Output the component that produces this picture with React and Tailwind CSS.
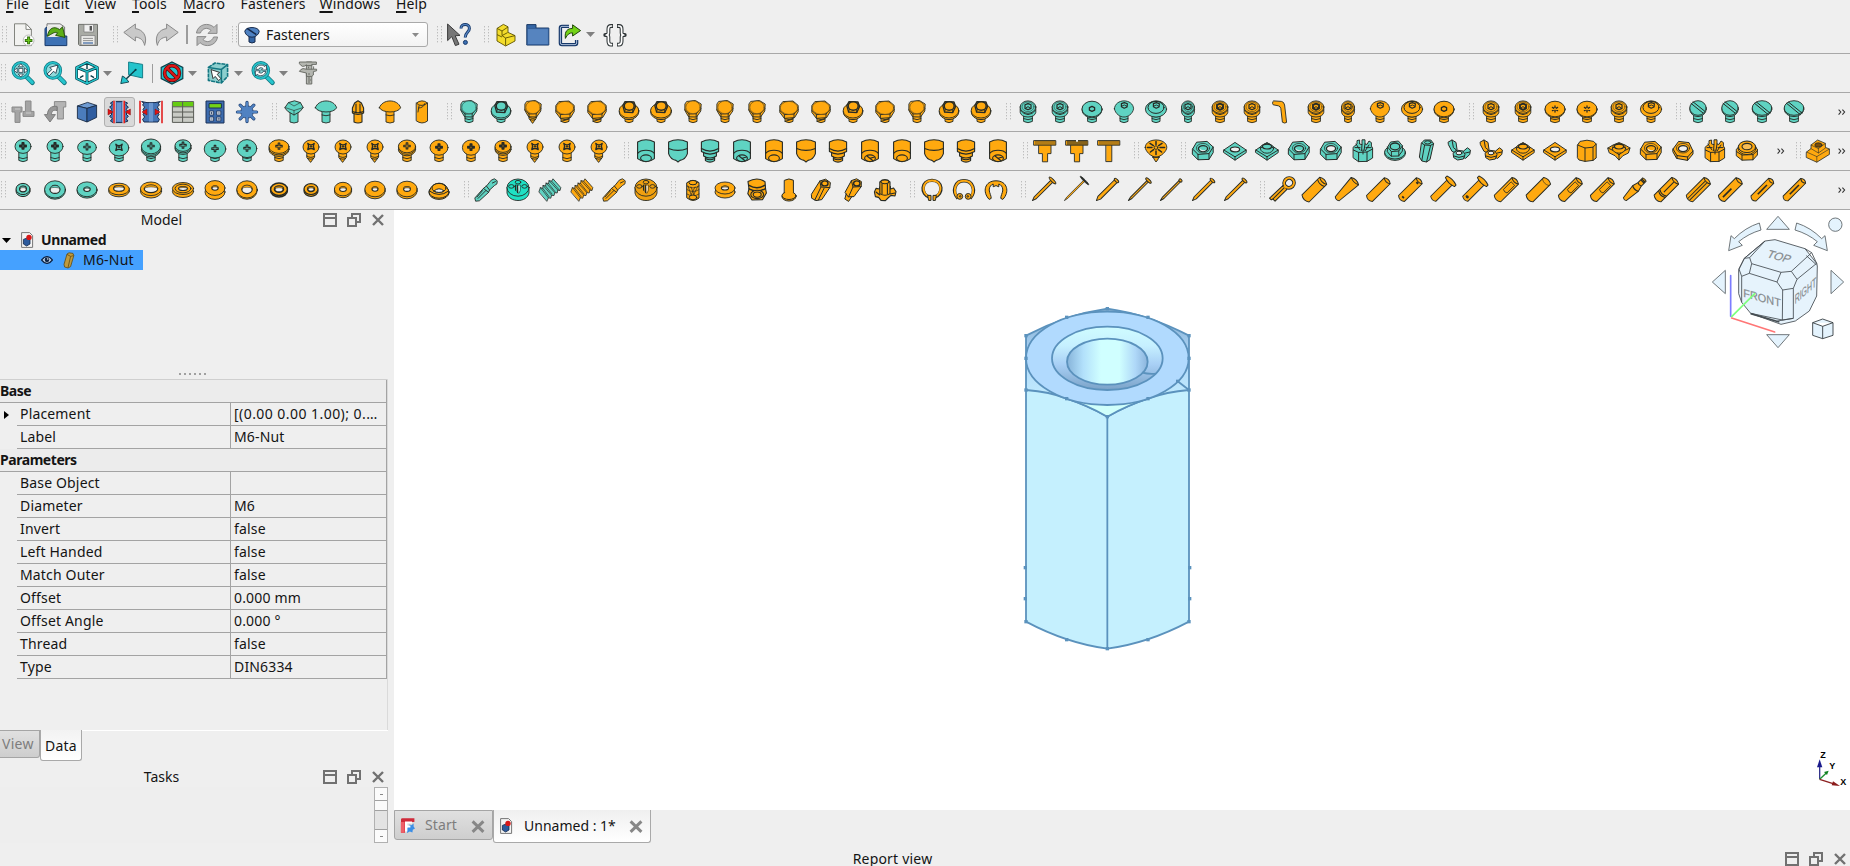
import React from "react";

const TEAL = "#5fd3c2";
const ORANGE = "#ffa90f";
const INK = "#262a26";

const Svg = ({ children, size = 24, box = 24, className = "" }) => (
  <svg width={size} height={size} viewBox={`0 0 ${box} ${box}`} className={`block shrink-0 overflow-visible ${className}`}>
    {children}
  </svg>
);

const Part = ({ c = ORANGE, w = 0.9, children }) => (
  <Svg>
    <g fill={c} stroke={INK} strokeWidth={w} strokeLinejoin="round" strokeLinecap="round">
      {children}
    </g>
  </Svg>
);

const Shank = ({ r = 4, top = 12, point = false }) =>
  point ? (
    <>
      <path d={`M${12 - r} ${top}V18.5L11.6 23.4L${12 + r - 0.6} 18V${top}z`} />
      <path d={`M${12 - r} 17Q12 20 ${12 + r - 0.5} 17M${12 - r + 1} 19.6Q12 21 ${12 + r - 1.5} 19.6`} fill="none" />
    </>
  ) : (
    <>
      <path d={`M${12 - r} ${top}V21.4Q12 24 ${12 + r} 21.4V${top}z`} />
      <path d={`M${12 - r} 18.6Q12 21 ${12 + r} 18.6`} fill="none" />
    </>
  );

/* Hexagon-head bolts */
const Hex = ({ c, wide, point }) => (
  <Part c={c}>
    <Shank r={4} top={13} point={point} />
    {wide ? (
      <>
        <path d="M6.2 1.6L16 1L21.2 5.4V11.6L17.6 17.6L7.4 18.4L2.8 12.4V6z" />
        <path d="M2.8 10.6L7.4 14.6L17 14L21.2 9.4M7.4 14.6V18.2M17 14V17.6" fill="none" />
        <ellipse cx="12" cy="7.9" rx="8.7" ry="6.5" strokeWidth=".5" />
        <path d="M8 21.4L16 19" fill="none" />
      </>
    ) : (
      <>
        <path d="M6 1.4L14.4 .5L20.2 4L19.8 11L15.6 17L7.6 16.8L3.8 10.4L3.9 4.4z" />
        <path d="M4 9.6L8 14L15.2 13.8L19.9 8.6M8 14V16.8M15.2 13.8V17" fill="none" />
        <ellipse cx="12" cy="7.3" rx="7.2" ry="6.4" strokeWidth=".5" />
      </>
    )}
  </Part>
);
const Flange = ({ c, big }) => (
  <Part c={c}>
    <Shank r={4} top={14} />
    <ellipse cx="12" cy="11.8" rx={big ? 10.4 : 9.8} ry="7.8" />
    <ellipse cx="12" cy="10.6" rx={big ? 10.4 : 9.8} ry="7.4" />
    <path d="M5.8 5.6L7.6 12L15.8 12.6L18.6 6.6L17 2L8 1.6z" strokeWidth="1.3" />
    <ellipse cx="12.2" cy="6" rx="5" ry="4.3" strokeWidth="1.5" />
    <path d="M7.6 12L8.4 9.4M15.8 12.6L15.2 9.6" fill="none" />
  </Part>
);

/* Carriage and T bolts */
const Carriage = ({ c }) => (
  <Part c={c}>
    <path d="M8 12V22Q12 24 16 22V12z" />
    <path d="M3 7.5L6.4 2.6L12.5 .8L18.4 2.6L21.2 7.5L18 11.5L12 15L6 11.5z" />
    <path d="M3 7.5L12 10.5L21.2 7.5M12 10.5V15M6.4 2.6L12 6L18.4 2.6" fill="none" strokeWidth=".6" />
  </Part>
);
const Dome = ({ c }) => (
  <Part c={c}>
    <path d="M8 11V22Q12 24 16 22V11z" />
    <path d="M8 15Q12 16.6 16 15" fill="none" />
    <path d="M1.4 7.8C4-1.4 20-1.4 22.6 7.8C20 13.4 4 13.4 1.4 7.8z" />
  </Part>
);
const SlimT = () => (
  <Part w={1.1}>
    <path d="M8 12V22Q12 24 16 22V12z" />
    <path d="M12 .8L15.4 3L17.6 8V13Q12 15.8 6.4 13V8L8.6 3z" />
    <path d="M10 4V13M14 4V13M6.4 11.6Q12 14 17.6 11.6" fill="none" />
  </Part>
);
const Stud = () => (
  <Part>
    <path d="M6.5 3Q12 -1.4 17.5 3V21Q12 25 6.5 21z" />
    <path d="M6.5 3Q8 6 12 5.4T17.5 3M8.6 8Q13.6 8 15 3.4M8 12L9 6" fill="none" />
  </Part>
);

/* Socket-head screws */
const Socket = ({ c, small, dark }) => {
  const r = small ? 6.4 : 7.8;
  return (
    <Part c={c}>
      <Shank r={small ? 3.4 : 4.4} top={14} />
      <path d={`M${12 - r} 6.6V12.4Q${12 - r + 1} 16.8 12 17Q${12 + r - 1} 16.8 ${12 + r} 12.4V6.6z`} />
      <path d={`M${12 - r} 10Q12 19.6 ${12 + r} 10`} fill="none" />
      <ellipse cx="12" cy="7.1" rx={r} ry="6.2" />
      <ellipse cx="12" cy="6.8" rx={r - 1.8} ry="4.8" strokeWidth=".5" />
      <path d="M9 4.8L12 3.6L15 4.8V8.4L12 9.8L9 8.4z" strokeWidth={dark ? 1.9 : 1.2} />
      <path d="M10 8L12 6.6L14 8" fill="none" strokeWidth="1" />
    </Part>
  );
};
const DiscSocket = ({ c, torx }) => (
  <Part c={c}>
    <Shank r={4.4} top={14} />
    <ellipse cx="12" cy="9.8" rx="10" ry="8" />
    <ellipse cx="12" cy="9" rx="10" ry="7.8" />
    {torx ? (
      <>
        <path d="M12 6V12M9.4 7.4L14.6 10.6M14.6 7.4L9.4 10.6" strokeWidth="1.3" />
        <circle cx="12" cy="9" r="1.1" stroke="none" />
      </>
    ) : (
      <path d="M9.4 7.6L12 6.4L14.6 7.6V10.2L12 11.4L9.4 10.2z" strokeWidth="1.3" />
    )}
  </Part>
);
const ButtonSocket = ({ c, flange }) => (
  <Part c={c}>
    <Shank r={4} top={13} />
    <path d="M2.4 8.8C3-1.8 21-1.8 21.6 8.8C20.6 14 16 17 12 17S3.4 14 2.4 8.8z" strokeWidth=".85" />
    {flange && (
      <>
        <ellipse cx="12" cy="9.2" rx="10.6" ry="7.9" />
        <ellipse cx="12" cy="7.4" rx="8" ry="6" strokeWidth="1" />
      </>
    )}
    <path d="M9.4 3.6L12.4 2.6L15.4 3.8L15 7L12.2 8.2L9.4 6.8z" strokeWidth="1.2" />
    <path d="M10 6L12.4 5L15 6.4" fill="none" />
  </Part>
);
const AllenKey = () => (
  <Part>
    <path d="M.8 1.8Q0 3.6 1.2 4.8L6.4 5.8Q8.4 6.4 8.8 8.4L10.4 22.2Q12.6 23.8 14.6 22.4L12.6 5Q12 1.8 9.4 1.4L2 .9z" />
  </Part>
);
const Slotted = ({ c, wide }) => (
  <Part c={c}>
    <Shank r={4.4} top={12} />
    <ellipse cx="12" cy="9.2" rx={wide ? 9.8 : 8.2} ry="7.4" />
    <ellipse cx="12" cy="8" rx={wide ? 9.8 : 8.2} ry="7.3" />
    <path d={wide ? "M4.4 3.2L18 14.4M6.4 2L20 13" : "M5 3.4L17 13M7 1.8L19 11.4"} strokeWidth="1" />
  </Part>
);

/* Cross-recess screws */
const Cross = ({ y = 7, bold }) => (
  <path
    d={`M11.2 ${y - 3.2}H12.8V${y - 0.8}H15.2V${y + 0.8}H12.8V${y + 3}H11.2V${y + 0.8}H8.8V${y - 0.8}H11.2z`}
    strokeWidth={bold ? 1.5 : 1.1}
  />
);
const XMark = ({ y = 7 }) => (
  <>
    <path d={`M8.8 ${y - 3}Q12 ${y} 15.2 ${y - 3}Q13.4 ${y} 15.2 ${y + 3.2}Q12 ${y + 1} 8.8 ${y + 3.2}Q10.6 ${y} 8.8 ${y - 3}z`} strokeWidth="1.3" />
    <circle cx="12" cy={y} r=".9" fill={INK} strokeWidth=".4" />
  </>
);
const Pan = ({ c, rx = 8, ry = 7, x, point, rim, bold, shank = 4.2, cy = 7.4 }) => (
  <Part c={c}>
    <Shank r={shank} top={12} point={point} />
    {rim && <ellipse cx="12" cy={cy + 3} rx={rx} ry={ry} />}
    {rim && <ellipse cx="12" cy={cy + 1.5} rx={rx} ry={ry} />}
    <ellipse cx="12" cy={cy} rx={rx} ry={ry} />
    {x ? <XMark y={cy - 0.6} /> : <Cross y={cy - 0.4} bold={bold} />}
  </Part>
);

/* Set screws */
const SetScrew = ({ c, tip }) => (
  <Part c={c} w={1.1}>
    {tip === "dog" ? (
      <>
        <path d="M7.4 16V21.6Q12 24.6 16.6 21.6V16z" />
        <path d="M5.6 12V17Q12 21 18.4 17V12z" />
        <path d="M3.4 3Q12 -1.4 20.6 3V12.6Q12 17.6 3.4 12.6z" />
        <path d="M3.4 9.6Q12 14.6 20.6 9.6M7.4 19.6Q12 22 16.6 19.6" fill="none" />
      </>
    ) : tip === "cone" ? (
      <>
        <path d="M2.6 3Q12 -1.4 21.4 3V14.6Q19.6 20.4 14 21.4L12 23L10 21.4Q4.4 20.4 2.6 14.6z" />
        <path d="M2.6 9.4Q12 13.4 21.4 9.4" fill="none" />
      </>
    ) : (
      <>
        <path d="M3.6 3Q12 -1.4 20.4 3V19.6Q12 26 3.6 19.6z" />
        <path d="M3.6 14.4Q6 11.2 12 11.2T20.4 14.4" fill="none" />
        <ellipse cx="12" cy="19.2" rx="5.4" ry="3.3" />
        {tip === "cup" && <path d="M9 17L15 21.8M12 19.2L16.6 18" fill="none" />}
      </>
    )}
  </Part>
);

/* Thumb screws and dial */
const Thumb = ({ narrow, notch }) => (
  <Part>
    <path d={narrow ? "M9.2 5H14.8V22.6H9.2z" : "M6 5H18V14.6H14.6V22.8H9.4V14.6H6z"} />
    <path d="M1 1.6H22.8V6.2H1z" />
    <path d="M3 1.6V5.4M5 1.6V5.4M7 1.6V5.4M9 1.6V5.4M11 1.6V5.4M13 1.6V5.4M15 1.6V5.4M17 1.6V5.4M19 1.6V5.4M21 1.6V5.4" strokeWidth={notch ? 1.1 : 0.7} />
    {notch && <path d="M11 1H13V2.8H11z" fill="#efefef" stroke="none" />}
  </Part>
);
const Dial = () => (
  <Part>
    <path d="M8 16L10.6 21L12 23L13.6 21L16 16z" />
    <path d="M1.2 8.4C1.2-1.6 22.8-1.6 22.8 8.4C22.8 12 17 18 12 18S1.2 12 1.2 8.4z" />
    <circle cx="12" cy="8.6" r="1.8" />
    <path d="M12 2.4V5.4M12 12V15.4M3.4 8.6H8M16 8.6H20.6M6 4.4L9.4 6.6M18 4.4L14.6 6.6M6.4 13L9.6 10.6M17.6 13L14.4 10.6" strokeWidth="1.5" />
    <path d="M8.6 18.4H15.4" fill="none" />
  </Part>
);

/* Nuts */
const HexNut = ({ c, open, tilt }) => (
  <Part c={c} w={1}>
    <path d={tilt ? "M2 10L7.6 2.4L18 3.6L22 12V15L16.6 21.4L5.6 19.4L2 13z" : "M1.6 10L5.6 3.2L16 2.4L22.2 8V13.6L18 20.4L7 20.8L1.6 15.4z"} />
    <path d={tilt ? "M2 10L6 16.6L16.6 18L22 12M6 16.6V19.4M16.6 18V21.2" : "M1.6 10L7 15.4L18 14.6L22.2 8M7 15.4V20.6M18 14.6V20.2"} fill="none" />
    <ellipse cx="12" cy="9.2" rx="6.6" ry="4.8" strokeWidth=".7" />
    <ellipse cx="12" cy="9.6" rx="4.6" ry="3" fill={open ? "#efefef" : c} strokeWidth="1.3" />
    {!open && <path d="M8.6 9.2Q12 12.8 15.6 10Q13.4 13.4 9.6 11.6z" fill="#efefef" stroke="none" />}
  </Part>
);
const SquareNut = ({ c, raised, curved }) => (
  <Part c={c} w={0.95}>
    <path d={curved ? "M1 9L6 6L12 3.6L18 6L23 9L21.4 14Q15 16 12 21Q9 16 2.6 14z" : "M.8 11L12 3.4L23.2 11V13.6L12 21.2L.8 13.6z"} />
    <path d={curved ? "M1 9L8 12.4L12 16L16 12.4L23 9M12 16V21" : "M.8 11L12 17.8L23.2 11M12 17.8V21"} fill="none" />
    {raised && <ellipse cx="12" cy="9.4" rx="6.6" ry="4.8" />}
    {raised && <path d="M5.4 9.4Q12 2 18.6 9.4" fill="none" />}
    <ellipse cx="12" cy={raised ? 7.6 : 10.4} rx="4.6" ry="2.4" fill={raised ? c : "#efefef"} strokeWidth="1.2" />
  </Part>
);
const Castle = ({ c }) => (
  <Part c={c} w={0.95}>
    <path d="M2.4 8L6 5V1.6L8.6 1V5L11 5.6V.8H14V5L16 5.4L18 2L20.4 3.6V7L21.6 9V19L16 22.4L7.4 22.6L2.4 19z" />
    <path d="M2.4 11L7.6 13.4L16 13L21.6 10M7.6 13.4V22.4M16 13V22.2M5 5L9 11M11 5.6L10.6 11.6M14 5L13 11.6M18 6L14.4 11.6M4 8.6H9M15 8.6H20M12 11V15" fill="none" strokeWidth="1" />
  </Part>
);
const FlangeNut = ({ c }) => (
  <Part c={c} w={0.95}>
    <ellipse cx="12" cy="14.4" rx="10.4" ry="7" />
    <ellipse cx="12" cy="13.2" rx="10.4" ry="6.8" />
    <path d="M4.6 8L7.6 3L15.4 2L19.4 6.8V12L15.6 17L8 17.2L4.6 13z" />
    <path d="M4.6 8L8.4 12.6L15.8 12L19.4 6.8M8.4 12.6V17M15.8 12V17" fill="none" />
    <ellipse cx="12" cy="7.4" rx="4.8" ry="3.4" strokeWidth="1.3" />
  </Part>
);
const LongNut = ({ c }) => (
  <Part c={c} w={1}>
    <path d="M6.6 4L9.4 1L15.8 1L18.6 4.6L15 20.6L11.6 23L6.8 22L4.6 18.4z" />
    <path d="M6.6 4L9.6 6L15.6 6.4L18.6 4.6M9.6 6L6.8 21.6M15.6 6.4L11.6 22.6" fill="none" />
    <ellipse cx="12.8" cy="3.4" rx="3.2" ry="1.6" />
  </Part>
);
const WingNut = ({ c }) => (
  <Part c={c} w={1}>
    <path d="M1.4 3L5 1L9 3.4L10 10.4L7.4 13.4L5 12.4L1.6 6z" />
    <path d="M16 12.6L20.4 8.8L23.4 11L22.8 15.4L18.6 19.4L15 18z" />
    <path d="M6.4 14L10 11.2L16 12L18 15.6L16.4 20L10.6 21L7 18.8z" />
    <path d="M5 1L6.4 8.6L9.4 11M18.4 14L22.8 13M7 17L12 18.4L17.4 17" fill="none" />
    <ellipse cx="12" cy="14" rx="3" ry="1.8" fill="#efefef" />
  </Part>
);
const CapNut = () => (
  <Part w={0.95}>
    <path d="M2.6 6L5 2.4L12 1.2L18.6 2.4L21.2 5V19L18 21.4L10 22.4L4 21L2.6 19z" />
    <path d="M2.6 6L10 9L18 8.2L21.2 5M10 9V22.2M18 8.2V21.4" fill="none" />
  </Part>
);
const Nyloc = () => (
  <Part w={0.95}>
    <path d="M1.6 10L5 7L19 7L22.4 10V16L18 20.8L7 21.2L1.6 17z" />
    <path d="M1.6 12.6L7 16L18 15.6L22.4 11.6M7 16V21M18 15.6V20.8" fill="none" />
    <ellipse cx="12" cy="9" rx="9" ry="6.6" />
    <ellipse cx="12" cy="7.8" rx="8.6" ry="5.8" />
    <ellipse cx="12" cy="7.6" rx="5" ry="3.2" fill="#f9bd55" strokeWidth="1.1" />
  </Part>
);
const TSlot = () => (
  <Part w={0.8}>
    <path d="M.6 13L5 9.6V6L11.6 1L19.4 4.4V8.4L23.4 10V15.4L10.8 23.2L.6 18.6z" />
    <path d="M5 6L12.4 9.6L19.4 4.4M12.4 9.6V14L19.4 9M5 9.6L12.4 14M.6 13L10.8 17.6L23.4 10M10.8 17.6V23" fill="none" strokeWidth=".6" />
    <ellipse cx="12.4" cy="6" rx="3.6" ry="2.2" fill="#7a4d08" />
  </Part>
);

/* Washers: outer radii, hole radii, thickness */
const Washer = ({ c = ORANGE, rx, ry, hx, hy, t = 2, w = 0.9, dy = 0, step }) => (
  <Part c={c} w={w}>
    <ellipse cx="12" cy={12 + t / 2} rx={rx} ry={ry} />
    <ellipse cx="12" cy={12 - t / 2} rx={rx} ry={ry} />
    {step && <ellipse cx="12" cy={12 - t / 2} rx={rx * 0.75} ry={ry * 0.72} />}
    <ellipse cx="12" cy={12 - t / 2 + dy} rx={hx} ry={hy} fill="#efefef" strokeWidth={w * 1.2} />
    <path d={`M${12 - hx} ${12 - t / 2 + dy}A${hx} ${hy} 0 0 1 ${12 + hx} ${12 - t / 2 + dy}A${hx} ${hy * 0.5} 0 0 0 ${12 - hx} ${12 - t / 2 + dy}`} strokeWidth=".5" />
  </Part>
);
const ConeWasher = () => (
  <Part w={1}>
    <ellipse cx="12" cy="14.8" rx="10" ry="6.6" />
    <ellipse cx="12" cy="13.8" rx="10" ry="6.4" />
    <path d="M2.4 13Q4.6 5.4 12 5.2T21.6 13Q12 20 2.4 13z" />
    <ellipse cx="12" cy="10" rx="7" ry="4.6" />
    <path d="M7 13Q12 8.4 17 13Q12 16 7 13z" fill="#efefef" />
  </Part>
);

/* Threaded parts */
const Tap = ({ c }) => (
  <Part c={c}>
    <path d="M17.6 2L20.4 .8L23.2 2.8L23 5.8L20.4 7.6L15.6 12L14.6 14.4L5.4 22.8L1.6 23.2L.8 20L9.4 10.4L12.4 8z" />
    <path d="M12.4 8L15.6 12M9.4 10.4L14.6 14.4M4 20.4L12 12.4M3 19L8.6 12.6M18.4 5L21.4 3.6" fill="none" />
  </Part>
);
const Die = ({ c }) => (
  <Part c={c}>
    <path d="M1 9.4V15C3 25 21 25 23 15V9.4z" />
    <ellipse cx="12" cy="9.6" rx="11" ry="8.6" />
    <ellipse cx="12" cy="4.2" rx="2.8" ry="1.8" />
    <ellipse cx="5.4" cy="8.4" rx="2.8" ry="1.8" />
    <ellipse cx="18.6" cy="8.4" rx="2.8" ry="1.8" />
    <path d="M9.4 7H14.6L14.4 12.6L13 15.4L10 12.6z" strokeWidth=".5" />
    <path d="M12 8L13.6 7.6V12L12.6 15z" fill="#efefef" stroke="none" />
    <path d="M11.6 7.6V14.6M9.6 7.4V12" fill="none" strokeWidth="1.3" />
  </Part>
);
const ThreadRod = ({ c }) => (
  <Part c={c} w={0.8}>
    <path d="M1 13.6L2.4 9.6L4.8 10.4L5 7.4L7.6 8L8 5L10.6 5.6L11 2.6L13.6 3.2L15 .8L22.8 9.6L22 12.6L19.8 12L19.2 15L16.8 14.6L16 17.6L13.6 17.2L12.8 20.2L10.4 19.8L9 23z" />
    <path d="M2.4 9.6L10.4 19.8M5 7.4L13.6 17.2M8 5L16.8 14.6M11 2.6L19.8 12M4.8 10.4L11 18.6M7.6 8L14 16M10.6 5.6L17 13.6M13.6 3.2L21 11.6" fill="none" strokeWidth=".7" />
  </Part>
);

/* Inserts, spacers */
const Insert = () => (
  <Part w={1}>
    <path d="M6 4.6Q12 0 18 4.6V20Q12 25 6 20z" />
    <path d="M6 8Q12 12 18 8M6 11.6Q12 15.6 18 11.6M6 16Q12 20 18 16M7 8L10.6 18M10 9L14 19M17 8L12 18M14 9L9 19" fill="none" strokeWidth=".7" />
    <ellipse cx="12" cy="4.6" rx="4" ry="2.2" />
    <ellipse cx="12" cy="19.4" rx="3.8" ry="2.4" />
  </Part>
);
const PressNut = () => (
  <Part w={1.1}>
    <path d="M3 3.6Q12 -1.6 20 3.6L20.6 11L21.4 15L17.6 21.6L7 22L2.8 15.6L4 11z" />
    <path d="M4 7.4Q12 12 19.6 7.4M4 10.8Q12 15 20 10.8" fill="none" strokeWidth="1.5" />
    <ellipse cx="12.2" cy="16.4" rx="6.4" ry="4.2" />
    <ellipse cx="12.2" cy="16.6" rx="4" ry="2.6" />
  </Part>
);
const Rivet = () => (
  <Part w={1}>
    <path d="M7.6 2.2Q12 -.4 16.4 2.2V16H7.6z" />
    <ellipse cx="12" cy="18.6" rx="7" ry="4.4" />
    <ellipse cx="12" cy="17.6" rx="7" ry="3.9" />
    <path d="M8.1 12.6H15.9V16H8.1z" stroke="none" />
  </Part>
);
const Standoff = ({ stud }) => (
  <Part w={1}>
    {stud && <path d="M5.2 15.6L3.8 21L7.6 23.4L11 18.4z" />}
    <path d={stud ? "M4.2 14L10.4 2.6L15.6 .8L20.4 3.6L20.2 8.6L13 18.6L7.6 18.8z" : "M2.6 16L10.8 3L16.6 1.2L21.4 4.6L20.8 9.6L12.8 21.6L7 22.6L3 20.4z"} />
    <path d={stud ? "M10.4 2.6L12 9L7.6 18.8M12 9L20.2 8.6" : "M10.8 3L12 9L5.8 22M12 9L20.8 9.6M15 10.4L9.4 22"} fill="none" />
    <ellipse cx="15.8" cy="5.4" rx="3.2" ry="2.5" strokeWidth="1.4" />
  </Part>
);
const TeeNut = () => (
  <Part w={1.1}>
    <path d="M1.4 14L3 10.4L6.6 11V9L17.4 8.6V11L20.6 10L23 13.6L22 18L18 17.4L15 20L12.4 22.6L8 22.4L5.6 19.4L2.4 18.6z" />
    <path d="M6.8 4Q12 -.4 17 4V15.6Q12 19 6.8 15.6z" />
    <ellipse cx="11.9" cy="3.8" rx="4" ry="1.9" />
    <path d="M9 6V16M14.4 6V16M3 14L6.8 17M17 16L22 15" fill="none" />
  </Part>
);

/* Retaining rings */
const Ring = ({ kind }) => (
  <Svg>
    <g fill="none" strokeLinecap="butt">
      {kind === "out" && (
        <>
          <path d="M10 19.4C-.4 16 1.4 2.4 12 2.4S24.4 16 14 19.4" stroke={INK} strokeWidth="3.4" />
          <path d="M10 19C.4 15.6 1.8 2.4 12 2.4S23.6 15.6 14 19" stroke={ORANGE} strokeWidth="2" />
          <path d="M7.6 17.4H11V22.4H8.6zM16.4 17.4H13V22.4H15.4z" fill={ORANGE} stroke={INK} strokeWidth="1" />
        </>
      )}
      {kind === "in" && (
        <>
          <path d="M6 20.4C-.6 13 3 2.8 12 2.8S24.6 13 18 20.4" stroke={INK} strokeWidth="3.4" />
          <path d="M6 20C-.2 12.6 3.4 2.8 12 2.8S24.2 12.6 18 20" stroke={ORANGE} strokeWidth="2" />
          <circle cx="7.8" cy="18.4" r="2.9" fill={ORANGE} stroke={INK} />
          <circle cx="16.2" cy="18.4" r="2.9" fill={ORANGE} stroke={INK} />
          <circle cx="8.2" cy="18.4" r=".8" stroke={INK} />
          <circle cx="15.8" cy="18.4" r=".8" stroke={INK} />
        </>
      )}
      {kind === "e" && (
        <path d="M5.2 21.4C-2 14 .6 2.8 12 2.8S26 14 18.8 21.4L16.8 20.4C16.6 18 18.6 15 18.8 12C18.8 8.8 16.8 6.6 14.8 6V8.8L12 7.6L9.2 8.8V6C7.2 6.6 5.2 8.8 5.2 12C5.4 15 7.4 18 7.2 20.4z" fill={ORANGE} stroke={INK} strokeWidth="1" />
      )}
    </g>
  </Svg>
);

/* Diagonal parts are drawn vertically and turned by 45 degrees */
const Diag = ({ w = 0.95, children }) => (
  <Svg>
    <g transform="rotate(45 12 12)" fill={ORANGE} stroke={INK} strokeWidth={w} strokeLinejoin="round">
      {children}
    </g>
  </Svg>
);
const Nail = ({ head = 3.6, body = 1.2, thin, len = 27 }) => (
  <Diag w={thin ? 0.7 : 0.95}>
    <path d={`M${12 - body} -1V${len - 4}L12 ${len}L${12 + body} ${len - 4}V-1z`} />
    <ellipse cx="12" cy="-1.4" rx={head} ry={thin ? 0.9 : 1.3} fill={thin ? INK : ORANGE} />
  </Diag>
);
const Pin = ({ r = 4.2, kind }) => (
  <Diag>
    {kind === "taper" ? (
      <>
        <path d="M6.8 -.6Q12 -3.8 17.2 -.6L14.8 24.4Q12 26.6 9.2 24.4z" />
        <path d="M6.8 -.6Q12 2 17.2 -.6" fill="none" />
      </>
    ) : kind === "headed" || kind === "headedHole" ? (
      <>
        <path d="M8.4 0V24.4Q12 26.8 15.6 24.4V0z" />
        <path d="M5.6 -1.4Q12 -3.8 18.4 -1.4V.8Q12 3.4 5.6 .8z" />
        {kind === "headedHole" && <ellipse cx="12" cy="21.6" rx="1.2" ry=".9" fill={INK} />}
      </>
    ) : kind === "tapThread" ? (
      <>
        <path d="M9.6 -2.8Q12 -4 14.4 -2.8V4L16 10L14 25Q12 26.4 10 25L8 10L9.6 4z" />
        <path d="M9.6 0H14.4M9.6 4Q12 5.4 14.4 4M8 10Q12 12 16 10M9.6 -1.4H14.4" fill="none" strokeWidth="1.2" />
      </>
    ) : (
      <>
        <path d={`M${12 - r} -1Q12 -4.2 ${12 + r} -1V24Q12 27.6 ${12 - r} 24z`} />
        {kind !== "plain" && <path d={`M${12 - r} -1Q12 2 ${12 + r} -1`} fill="none" />}
      </>
    )}
    {kind === "plain" && <path d={`M${12 - r} 1Q12 4 ${12 + r} 1`} fill="none" strokeWidth=".6" />}
    {kind === "dowel" && <path d={`M${12 - r} 2Q12 5 ${12 + r} 2`} fill="none" />}
    {kind === "holes" && <path d="M11 2H13.4M11 22H13.4" strokeWidth="1.8" />}
    {kind === "flat" && <path d="M9.8 2.6H14.8V13.4Q12 15 9.8 13.4z" strokeWidth=".8" />}
    {kind === "band" && <path d="M7.4 16Q12 19 16.6 16M7.4 17.8Q12 20.8 16.6 17.8M12 1V15" fill="none" strokeWidth="1.1" />}
    {kind === "groove" && <path d="M10.8 1V25.6M13.2 1V25" fill="none" />}
    {kind === "slotLow" && <path d="M12 10V22" strokeWidth="1.6" />}
    {kind === "slotMid" && <path d="M12 5V18" strokeWidth="1.6" />}
  </Diag>
);
const Cotter = () => (
  <Diag w={1}>
    <path d="M9.6 8L9 26.6H11.4L12 24.8H15V8z" />
    <path d="M12 8V25" fill="none" />
    <ellipse cx="12" cy="2" rx="4.8" ry="5" fill="none" stroke={INK} strokeWidth="3.8" />
    <ellipse cx="12" cy="2" rx="4.8" ry="5" fill="none" stroke={ORANGE} strokeWidth="2" />
    <path d="M10.4 6.4H13.8V8.6H10.4z" stroke="none" />
  </Diag>
);

/* File and view icons */
const G = "#8a8a8a";
const NewDoc = () => (
  <Svg>
    <path d="M2.5 .8H14L19.4 6.4V22.6H2.5z" fill="#f2f2f0" stroke="#83857f" />
    <path d="M14 .8V6.4H19.4z" fill="#fff" stroke="#83857f" strokeLinejoin="round" />
    <circle cx="16.6" cy="17.4" r="5.4" fill="#fff" stroke="#aaa" strokeWidth=".8" />
    <path d="M16.6 13.6V21.2M12.8 17.4H20.4" stroke="#2f6b0a" strokeWidth="3" />
    <path d="M16.6 14.4V20.4M13.6 17.4H19.6" stroke="#6cc81e" strokeWidth="1.4" />
  </Svg>
);
const OpenDoc = () => (
  <Svg>
    <path d="M3 .8H16L20.6 4V22H3z" fill="#eee" stroke="#777" />
    <path d="M1 5.4L3 4V13H22.8V22.6H1z" fill="#3d71b4" stroke="#17396b" />
    <path d="M3 3H19V14H3z" fill="#e8e8e4" />
    <path d="M3.4 13.4C4.6 5 10 2.6 15.6 6.6L18.6 3.8L21 14.4L11.6 12.4L13.6 9.8C10.4 8.6 8.6 10.4 3.4 13.4z" fill="#5cae16" stroke="#1e4608" strokeWidth=".9" />
  </Svg>
);
const Save = () => (
  <Svg>
    <path d="M2.5 1.4H21.5V22.5H3.6L2.5 21.4z" fill="#a9aba5" stroke="#6f716c" />
    <path d="M8 1.6H17.6V9H8z" fill="#f1f1f1" stroke="#777" strokeWidth=".7" />
    <path d="M13.6 3H16V7.6H13.6z" fill="#555" />
    <path d="M5 12.6H19V22H5z" fill="#ececea" stroke="#777" strokeWidth=".7" />
    <path d="M7 15.4H17M7 17.6H17" stroke="#888" strokeWidth=".9" />
    <path d="M7 20H17" stroke="#5479ad" strokeWidth="1.4" />
  </Svg>
);
const Undo = ({ flip }) => (
  <Svg>
    <path transform={flip ? "translate(24 0) scale(-1 1)" : undefined} d="M.8 9.4L12.4 1V5.6C19.6 6.4 25 13 21.6 22.4C20.4 17 17.4 14.6 12.4 14V18z" fill="#c9c9c9" stroke={G} strokeLinejoin="round" />
  </Svg>
);
const Refresh = () => (
  <Svg>
    <g fill="#b9b9b9" stroke={G} strokeLinejoin="round">
      <path d="M1.4 10C3 .6 14 -.8 19 4.4L22 1.4V10.4H13L16 7.4C12.4 4 7.4 5 5.4 10z" />
      <path d="M22.6 14C21 23.4 10 24.8 5 19.6L2 22.6V13.6H11L8 16.6C11.6 20 16.6 19 18.6 14z" />
    </g>
  </Svg>
);
const Workbench = () => (
  <Svg size={16} box={16}>
    <path d="M5 8V15Q8 17 11 15V8z" fill="#3465a4" stroke="#16294a" />
    <path d="M.8 4.6C1 -.8 15-.8 15.2 4.6C14.6 8 11 10.2 8 10.2S1.4 8 .8 4.6z" fill="#4f82c2" stroke="#16294a" />
    <path d="M3 1.4L12.4 7.6" stroke="#16294a" strokeWidth="1.6" />
  </Svg>
);
const WhatsThis = () => (
  <Svg>
    <path d="M.6 1V17.6L4.8 13.6L8.4 22.6L12 21.2L8.2 12.8L13 12.4z" fill="#777" stroke="#3c3c3c" strokeLinejoin="round" />
    <path d="M14 5.4C14 .2 22.4 .2 22.4 5.4C22.4 9.4 18.2 9.4 18.2 14.4" fill="none" stroke="#17396b" strokeWidth="3" />
    <path d="M14 5.4C14 .2 22.4 .2 22.4 5.4C22.4 9.4 18.2 9.4 18.2 14.4" fill="none" stroke="#5a8ac8" strokeWidth="1.2" />
    <circle cx="18.4" cy="19.4" r="2" fill="#3d71b4" stroke="#17396b" />
  </Svg>
);
const PartIcon = () => (
  <Svg>
    <g fill="#f3dc2b" stroke="#5d5200" strokeWidth=".9" strokeLinejoin="round">
      <path d="M3 5.4L9.4 1.4L14 3.8V9.4L21 12.6V18L11.6 23L3 18z" />
      <path d="M3 5.4L8 8L14 4M8 8V12.6L13.6 9.6M8 12.6L11.6 15L21 12.6M11.6 15V22.6M3 11.6L8 14" fill="none" />
    </g>
  </Svg>
);
const Folder = () => (
  <Svg>
    <path d="M.8 1.6H10V5H22.8V22H.8z" fill="#3465a4" stroke="#1b3a66" />
    <path d="M1.4 5.6H22.4V21.6H1.4z" fill="#5684bf" stroke="#2b548e" strokeWidth=".7" />
  </Svg>
);
const LinkIcon = () => (
  <Svg>
    <path d="M11 3.4H4Q2.4 3.4 2.4 5V20Q2.4 21.6 4 21.6H17Q18.6 21.6 18.6 20V17" fill="none" stroke="#17396b" strokeWidth="3.4" />
    <path d="M11 3.4H4Q2.4 3.4 2.4 5V20Q2.4 21.6 4 21.6H17Q18.6 21.6 18.6 20V17" fill="none" stroke="#b9cbe2" strokeWidth=".9" />
    <path d="M7.4 15.4C6.4 8 9.6 5.4 14.6 5.4V1.8L22.6 7.6L14.6 13V9.8C11.4 9.8 9 11.6 7.4 15.4z" fill="#73d216" stroke="#1e4608" strokeLinejoin="round" />
  </Svg>
);
const Braces = () => (
  <Svg>
    <g fill="none" strokeLinejoin="round" transform="translate(0 1)">
      <path d="M10 2H8Q5.4 2 5.4 5V9Q5.4 11 2.2 11Q5.4 11 5.4 13V17Q5.4 20.6 8 20.6H10M14 2H16Q18.6 2 18.6 5V9Q18.6 11 21.8 11Q18.6 11 18.6 13V17Q18.6 20.6 16 20.6H14" stroke="#2e3436" strokeWidth="3.8" />
      <path d="M9.2 2H8Q5.4 2 5.4 5V9Q5.4 11 3.2 11Q5.4 11 5.4 13V17Q5.4 20.6 8 20.6H9.2M14.8 2H16Q18.6 2 18.6 5V9Q18.6 11 20.8 11Q18.6 11 18.6 13V17Q18.6 20.6 16 20.6H14.8" stroke="#fff" strokeWidth="1.7" />
    </g>
  </Svg>
);

const AQ = "#25c4cc";
const DK = "#0a3f49";
const Mag = ({ kind }) => (
  <Svg>
    <path d="M14.4 14.6L21.4 21.6" stroke="#137681" strokeWidth="4.8" strokeLinecap="round" />
    <path d="M14.6 14.8L21.2 21.4" stroke={AQ} strokeWidth="3.2" strokeLinecap="round" />
    <circle cx="9.8" cy="9.4" r="7.8" fill="#8fdadb" stroke="#137681" strokeWidth="3" />
    <circle cx="9.8" cy="9.4" r="7.8" fill="none" stroke={AQ} strokeWidth="1.6" />
    <g transform="translate(.4 .4)">
      {kind === "fit" && <path d="M9.4 2.4L12 5.4H6.8zM9.4 15.6L12 12.6H6.8zM2.8 9L5.8 6.4V11.6zM16 9L13 6.4V11.6zM7.4 7H11.4V11H7.4z" fill="#fff" stroke="#123" strokeWidth=".7" />}
      {kind === "sel" && <path d="M3.6 12.6L8.4 8.2L6.4 6L14.6 3.6L12.4 12L10.2 9.8L5.8 14.4z" fill="#fff" stroke="#123" strokeWidth=".8" />}
      {kind === "sync" && <path d="M4.4 8C5.2 3.4 11 2.6 13.2 5.2L15 3.4V8.6H10L11.6 7C9.6 5.6 7.6 6.4 7.2 8zM14.4 10C13.6 14.6 8 15.4 5.8 12.8L4 14.6V9.4H9L7.4 11C9.4 12.4 11.4 11.6 11.8 10z" fill="#fff" stroke="#123" strokeWidth=".7" />}
    </g>
  </Svg>
);
const IsoCube = () => (
  <Svg>
    <g fill="none" strokeLinejoin="round">
      <path d="M12 1.4L22.4 6.4V17.6L12 22.6L1.6 17.6V6.4zM1.6 6.4L12 10.6L22.4 6.4M12 10.6V22.6" fill="#fff" stroke={DK} strokeWidth="2.8" />
      <path d="M12 1.4L22.4 6.4V17.6L12 22.6L1.6 17.6V6.4zM1.6 6.4L12 10.6L22.4 6.4M12 10.6V22.6" stroke={AQ} strokeWidth="1.5" />
      <path d="M12 4V8M5 16.6L8.4 14.6M19 16.6L15.6 14.6" stroke={DK} strokeWidth="1.4" />
    </g>
  </Svg>
);
const PlaneView = () => (
  <Svg>
    <path d="M8.6 1L22.6 3.4V17L8.6 13.8z" fill={AQ} stroke="#16808a" strokeLinejoin="round" />
    <path d="M16 8.4L5.6 18.4" stroke={DK} strokeWidth="1.4" />
    <path d="M.8 22.6L2.4 15L5 16.6L7.2 18.8L8.8 21z" fill={AQ} stroke={DK} strokeLinejoin="round" strokeWidth=".9" />
    <circle cx="15.6" cy="8.8" r="1" fill={DK} />
  </Svg>
);
const NoClip = () => (
  <Svg>
    <path d="M12 1L22.8 6.4V17.6L12 23L1.2 17.6V6.4z" fill={AQ} stroke={DK} strokeWidth="1.2" />
    <circle cx="12" cy="12" r="7.4" fill={AQ} stroke="#5d0606" strokeWidth="3.6" />
    <path d="M6.8 6.8L17.2 17.2" stroke="#5d0606" strokeWidth="3.6" />
    <circle cx="12" cy="12" r="7.4" fill="none" stroke="#dd1717" strokeWidth="2.1" />
    <path d="M6.8 6.8L17.2 17.2" stroke="#dd1717" strokeWidth="2.1" />
  </Svg>
);
const SelCube = () => (
  <Svg>
    <path d="M2.4 6.4L9 2L21.6 3.6V15.4L15.4 22L2.4 19.4z" fill="#8ccfce" stroke="#137681" strokeWidth="1.6" strokeLinejoin="round" strokeDasharray="4 .8" />
    <path d="M2.4 6.4L15.4 8.4L21.6 3.6M15.4 8.4V22" fill="none" stroke="#137681" strokeWidth="1.5" />
    <path d="M5 8.6L13.6 11.4L11.2 13.4L14.8 17.6L12.6 19.6L9.2 15.4L7 17.6z" fill="#fff" stroke="#222" strokeWidth=".9" />
  </Svg>
);
const Caliper = () => (
  <Svg>
    <g fill="#b4b6b0" stroke="#62645e" strokeWidth=".9" strokeLinejoin="round">
      <path d="M10.4 1H15.8V23H10.4z" />
      <path d="M3.4 1H20.4V3.4H15.8V4.6H10.4V3.8Q9 5.4 6.6 5.4Q4.6 4.6 3.4 2.6z" />
      <path d="M3.4 10.4Q4.4 8.2 7 7.6L10.4 8.2H20.6V9.8L17.4 10.6V14L15.8 15.4H10.4V12z" />
      <path d="M17.6 5.4V8M12 13H14M12 17H14M12 19H15M12 21H14M12.6 5.6V7.4" fill="none" />
    </g>
  </Svg>
);

const MoveBolt = () => (
  <Svg>
    <path d="M1 7H11V12H9V22.4H4V12H1z" fill="#a4a4a4" stroke={G} />
    <path d="M14.4 1H20V11.4H23V16.4H12V11.4H14.4z" fill="#a4a4a4" stroke={G} />
    <path d="M4 9H9M15 13H20" stroke="#ccc" />
  </Svg>
);
const FlipBolt = () => (
  <Svg>
    <path d="M11.4 1.6H22.8V7H20.4V19H14.4V7H11.4z" fill="#b4b4b4" stroke={G} />
    <path d="M14 6.4C8 5.4 4.6 9.4 4.4 14.6H1.4L7 22L12.4 14.6H8.4C8.6 11 10.4 9.6 14 10.6z" fill="#989898" stroke="#7c7c7c" />
  </Svg>
);
const BlueCube = () => (
  <Svg>
    <g stroke="#1a2b45" strokeWidth=".9" strokeLinejoin="round">
      <path d="M2.4 6L12.6 2.4L21.6 5.4L12 8.4z" fill="#6f9bd2" />
      <path d="M2.4 6L12 8.4V22L2.4 18.4z" fill="#4b7cbc" />
      <path d="M12 8.4L21.6 5.4V17.4L12 22z" fill="#2f5da0" />
    </g>
  </Svg>
);
const MatchScrew = ({ inner }) => (
  <Svg>
    <path d={inner ? "M2.6 1.6L5 3L3.6 5L5.6 7L4 9.6L5.6 12L4 14.4L5.6 17L3.6 19.4L5 22H19L20.4 19.4L18.4 17L20 14.4L18.4 12L20 9.6L18.4 7L20.4 5L19 3L21.4 1.6L16 2.6H8z" : "M6 1.4H17L20.6 3L18.6 5L21.4 7L19 9.4L21.4 11.6L19 14L21.4 16.4L19 18.6L21 21L17 22.6H6L3.4 21L5.4 18.6L2.6 16.4L5 14L2.6 11.6L5 9.4L2.6 7L5.4 5L3.4 3z"} fill="#4474b5" stroke="#182d4e" />
    <path d="M10 2.8H14V21.6H10z" fill="#7aa4d8" opacity=".7" />
    {inner ? (
      <>
        <path d="M1 .8V23.2M23 .8V23.2" stroke="#e11515" strokeWidth="1.5" />
        <path d="M3 12L8 9V15zM21 12L16 9V15z" fill="#e11515" stroke="#7d0d0d" strokeWidth=".5" />
      </>
    ) : (
      <>
        <path d="M7.4 .8V23.2M16.8 .8V23.2" stroke="#e9d5d5" strokeWidth="2.6" />
        <path d="M7 .8V23.2M17.2 .8V23.2" stroke="#e11515" strokeWidth="1.5" />
        <path d="M6 12L1 9V15zM18.4 12L23.4 9V15z" fill="#e11515" stroke="#7d0d0d" strokeWidth=".5" />
      </>
    )}
  </Svg>
);
const Sheet = () => (
  <Svg>
    <path d="M1.4 1.6H22.6V22.4H1.4z" fill="#c9cbc5" stroke="#5a5c57" />
    <path d="M1.8 2H22.2V6.6H1.8z" fill="#66cc12" />
    <path d="M1.4 6.8H22.6M1.4 12H22.6M1.4 17.2H22.6M11.6 1.6V22.4" stroke="#5a5c57" fill="none" />
  </Svg>
);
const Calc = () => (
  <Svg>
    <path d="M3 1H21V23H3z" fill="#3c6bae" stroke="#1b3156" />
    <path d="M6 3.6H18.4V8H6z" fill="#73d216" stroke="#1b3156" />
    <path d="M6.4 11H10.6V15H6.4zM13.6 11H17.8V15H13.6zM6.4 17H10.6V21H6.4zM13.6 17H17.8V21H13.6z" fill="#dfe5ee" stroke="#1b3156" strokeWidth=".8" />
    <path d="M7.4 13H9.6M8.5 12V14M14.6 13H16.8M7.4 19H9.6M14.6 18.4H16.8M14.6 19.8H16.8" stroke="#1b3156" strokeWidth=".7" />
  </Svg>
);
const GearIcon = () => (
  <Svg>
    <g stroke="#1f3f70" strokeWidth="3.2" strokeLinecap="round">
      <path d="M12 2.4V21.6M2.4 12H21.6M5.2 5.2L18.8 18.8M18.8 5.2L5.2 18.8" />
    </g>
    <circle cx="12" cy="12" r="6.2" fill="#4f80c0" stroke="#1f3f70" strokeWidth=".8" />
    <path d="M12 2.4V21.6M2.4 12H21.6M5.2 5.2L18.8 18.8M18.8 5.2L5.2 18.8" stroke="#5082c2" strokeWidth="2" strokeLinecap="round" />
  </Svg>
);

/* Toolbar scaffolding */
const Handle = () => (
  <svg width="7" height="20" viewBox="0 0 7 20" className="block shrink-0">
    {[1, 4, 7, 10, 13, 16].map((y) => (
      <g key={y} fill="#bdbdbd">
        <rect x="1" y={y} width="1" height="1.4" />
        <rect x="5" y={y} width="1" height="1.4" />
      </g>
    ))}
  </svg>
);
const Group = ({ items }) => (
  <div className="flex shrink-0 items-center pr-2">
    <Handle />
    {items.map((it, i) => (
      <div key={i} className="flex h-8 w-8 items-center justify-center">{it}</div>
    ))}
  </div>
);
const Bar = ({ children }) => (
  <div className="relative flex h-[39px] shrink-0 items-center overflow-hidden border-b border-[#a8a8a8]">{children}</div>
);
const Btn = ({ children }) => <div className="flex h-8 w-8 shrink-0 items-center justify-center">{children}</div>;
const Drop = () => (
  <div className="flex w-[13.3px] shrink-0 justify-center">
    <svg width="9" height="5" viewBox="0 0 9 5" className="mr-1"><path d="M0 0H9L4.5 5z" fill="#808080" /></svg>
  </div>
);
const Sep = () => (
  <div className="flex w-2 shrink-0 justify-center"><div className="h-[19px] w-[1.5px] bg-[#9c9c9c]" /></div>
);
const More = ({ className = "" }) => (
  <svg width="8" height="7" viewBox="0 0 8 7" className={`block shrink-0 ${className}`}>
    <path d="M.6 .6L2.8 3L.6 5.6M4.4 .6L6.6 3L4.4 5.6" fill="none" stroke="#333" strokeWidth="1.1" />
  </svg>
);

const T = TEAL;
const rep = (n, f) => Array.from({ length: n }, (_, i) => f(i));

const row3 = [
  [
    <MoveBolt />, <FlipBolt />, <BlueCube />,
    <div className="flex h-[30px] w-[31px] shrink-0 items-center justify-center rounded-[3px] border border-[#b0b0b0] bg-[#d9d9d9]"><MatchScrew /></div>,
    <MatchScrew inner />, <Sheet />, <Calc />, <GearIcon />,
  ],
  [<Carriage c={T} />, <Dome c={T} />, <SlimT />, <Dome />, <Stud />],
  [
    <Hex c={T} />, <Flange c={T} />, <Hex point />, <Hex wide />, <Hex wide />, <Flange />, <Flange big />, <Hex />, <Hex />,
    <Hex />, <Hex wide />, <Hex wide />, <Flange />, <Hex wide />, <Hex />, <Flange />, <Flange />,
  ],
  [
    <Socket c={T} />, <Socket c={T} />, <DiscSocket c={T} />, <ButtonSocket c={T} />, <ButtonSocket c={T} flange />, <Socket c={T} small />,
    <Socket dark />, <Socket />, <AllenKey />, <Socket dark />, <Socket small />, <ButtonSocket />, <ButtonSocket flange />, <DiscSocket />,
  ],
  [<Socket />, <Socket dark />, <DiscSocket torx />, <DiscSocket torx />, <Socket />, <ButtonSocket flange />],
  [<Slotted c={T} />, <Slotted c={T} />, <Slotted c={T} wide />, <Slotted c={T} wide />],
];

const row4 = [
  [
    <Pan c={T} bold />, <Pan c={T} bold />, <Pan c={T} rx={9.4} shank={4} cy={8.4} />, <Pan c={T} rx={9.8} ry={8.2} x cy={8.8} />,
    <Pan c={T} rx={9.6} ry={7.4} rim />, <Pan c={T} rx={8} ry={5.8} rim cy={6.6} />, <Pan c={T} rx={10.8} ry={9} cy={10} />, <Pan c={T} rx={9.8} ry={9} cy={9.6} />,
    <Pan rx={10} ry={6.8} rim cy={7.6} />, <Pan x point cy={8} />, <Pan x point cy={8} />, <Pan x point cy={8} />, <Pan rx={8.6} ry={6.4} rim />,
    <Pan rx={9} ry={7.6} bold cy={8.6} />, <Pan rx={8.6} ry={7.6} bold cy={8.6} />, <Pan rx={8} ry={6} rim bold />, <Pan x point cy={8} />, <Pan x cy={8} />, <Pan x point cy={8} />,
  ],
  [T, ORANGE, ORANGE].flatMap((c, g) => ["flat", "cone", "dog", "cup"].map((tip) => <SetScrew key={g + tip} c={c} tip={tip} />)),
  [<Thumb />, <Thumb notch />, <Thumb narrow />],
  [<Dial />],
  [
    <HexNut c={T} />, <SquareNut c={T} />, <SquareNut c={T} raised />, <HexNut c={T} />, <HexNut c={T} open />, <Castle c={T} />, <FlangeNut c={T} />,
    <LongNut c={T} />, <WingNut c={T} />, <WingNut />, <SquareNut raised />, <SquareNut />, <CapNut />, <SquareNut raised curved />, <HexNut c={ORANGE} />,
    <HexNut c={ORANGE} open tilt />, <Castle />, <Nyloc />,
  ],
];

const row5 = [
  [
    <Washer c={T} rx={7} ry={5.6} hx={3.4} hy={2.8} w={1} />, <Washer c={T} rx={10.4} ry={8.6} hx={5} hy={4} t={1.2} />, <Washer c={T} rx={10} ry={7.4} hx={3.2} hy={2.2} t={1.4} />,
    <Washer rx={10.4} ry={5.8} hx={5.4} hy={2.8} dy={-0.6} />, <Washer rx={10.6} ry={6.8} hx={6.8} hy={3.8} t={2.4} />, <Washer rx={10.6} ry={6} hx={4.4} hy={2} t={3} step />,
    <Washer rx={10} ry={7.4} hx={3.2} hy={2.2} t={4} />, <Washer rx={10.2} ry={8.6} hx={5.2} hy={4.2} t={1.2} />, <Washer rx={8.4} ry={6.2} hx={4.4} hy={3} t={1.6} w={1.5} />,
    <Washer rx={7} ry={5.4} hx={3.4} hy={2.4} t={1.8} w={1.2} />, <Washer rx={8.6} ry={6.8} hx={3.4} hy={2.4} t={1.8} />, <Washer rx={10.2} ry={7.8} hx={3} hy={2.2} t={2} />,
    <Washer rx={10.2} ry={7.8} hx={3.4} hy={2.4} t={2} />, <ConeWasher />,
  ],
  [<Tap c={T} />, <Die c="#1fe0c4" />, <ThreadRod c={T} />, <ThreadRod c={ORANGE} />, <Tap />, <Die c="#f0a010" />],
  [<Insert />, <Washer rx={10} ry={6} hx={3.6} hy={2} t={4} />, <PressNut />, <Rivet />, <Standoff />, <Standoff stud />, <TeeNut />],
  [<Ring kind="out" />, <Ring kind="in" />, <Ring kind="e" />],
  [<Nail head={4.6} body={1.4} />, <Nail head={6} body={0.8} thin />, <Nail body={1.9} head={2.8} />, <Nail head={3.6} body={1} />, <Nail head={1.8} body={1} />, <Nail head={3} body={1.5} />, <Nail head={3.2} body={1.4} />],
  [
    <Cotter />, <Pin r={5} kind="dowel" />, <Pin kind="taper" />, <Pin />, <Pin r={4.2} kind="holes" />, <Pin kind="headed" />, <Pin kind="headedHole" />,
    <Pin r={4.6} kind="flat" />, <Pin r={4.8} kind="plain" />, <Pin r={4.4} kind="flat" />, <Pin r={4.4} kind="flat" />, <Pin kind="tapThread" />, <Pin r={4.8} kind="band" />,
    <Pin r={4.6} kind="groove" />, <Pin r={4.4} kind="slotLow" />, <Pin r={3.6} kind="slotMid" />, <Pin r={3.4} kind="slotMid" />,
  ],
];

const menu = [
  ["File", "w-[38px]"], ["Edit", "w-[41px]"], ["View", "w-[47px]"], ["Tools", "w-[51px]"],
  ["Macro", "w-[57.5px]"], ["Fasteners", "w-[79px]"], ["Windows", "w-[76.5px]"], ["Help", "w-[40px]"],
];

/* Dock title buttons */
const DockButtons = () => (
  <div className="flex gap-[10px]">
    <svg width="14" height="14" viewBox="0 0 14 14"><path d="M1 1H13V13H1zM1 5H13" fill="none" stroke="#717171" strokeWidth="2" /></svg>
    <svg width="14" height="14" viewBox="0 0 14 14"><path d="M5 4V1H13V9H10M1 5H9V13H1z" fill="none" stroke="#717171" strokeWidth="2" /></svg>
    <svg width="14" height="14" viewBox="0 0 14 14"><path d="M2 2L12 12M12 2L2 12" stroke="#717171" strokeWidth="2.4" /></svg>
  </div>
);
const DocIcon = ({ size = 16 }) => (
  <Svg size={size} box={16}>
    <path d="M2.6 .6H10.6L13.6 3.6V15.4H2.6z" fill="#f4f4f4" stroke="#777" />
    <path d="M4.4 7.4L8 6L11 7.6V12L7.6 14L4.4 12z" fill="#2c5a9c" stroke="#13284a" strokeWidth=".8" />
    <circle cx="10" cy="5.4" r="2.7" fill="#d81818" />
  </Svg>
);

const props = [
  ["h", "Base"],
  ["r", "Placement", "[(0.00 0.00 1.00); 0.…", true],
  ["r", "Label", "M6-Nut"],
  ["h", "Parameters"],
  ["r", "Base Object", ""],
  ["r", "Diameter", "M6"],
  ["r", "Invert", "false"],
  ["r", "Left Handed", "false"],
  ["r", "Match Outer", "false"],
  ["r", "Offset", "0.000 mm"],
  ["r", "Offset Angle", "0.000 °"],
  ["r", "Thread", "false"],
  ["r", "Type", "DIN6334"],
];

const PropertyTable = () => (
  <div className="w-[387px] border-t border-[#cfcfcf]">
    {props.map(([k, label, value, arrow], i) =>
      k === "h" ? (
        <div key={i} className="flex h-[23px] items-center border-r border-b border-[#a3a3a3] bg-[#ececec] text-[14px] font-bold">
          <span className="tracking-[-0.45px]">{label}</span>
        </div>
      ) : (
        <div key={i} className="flex h-[23px]">
          <div className="flex w-[17px] items-center pl-1">
            {arrow && <svg width="5" height="8" viewBox="0 0 5 8"><path d="M0 0L5 4L0 8z" fill="#000" /></svg>}
          </div>
          <div className="flex w-[214px] items-center border-r border-b border-[#a3a3a3] pl-[3px] tracking-[0.16px]">{label}</div>
          <div className={`flex flex-1 items-center border-r border-b border-[#a3a3a3] pl-[3px] whitespace-nowrap ${arrow ? "tracking-[0.45px]" : "tracking-[0.16px]"}`}>{value}</div>
        </div>
      )
    )}
  </div>
);

const NutModel = () => (
  <svg width="210" height="370" viewBox="0 0 630 1110" className="absolute top-[85px] left-[606px]">
    <defs>
      <linearGradient id="bore" x1="0" x2="1">
        <stop offset="0" stopColor="#86b3d9" /><stop offset=".2" stopColor="#b2e0fb" /><stop offset=".42" stopColor="#d0ffff" />
        <stop offset=".65" stopColor="#d0ffff" /><stop offset=".85" stopColor="#aed7f8" /><stop offset="1" stopColor="#8bb4dc" />
      </linearGradient>
      <linearGradient id="chamfer" x1="0" y1="0" x2="0" y2="1">
        <stop offset="0" stopColor="#cffcff" /><stop offset=".3" stopColor="#c6f0ff" /><stop offset=".6" stopColor="#a8cff5" /><stop offset="1" stopColor="#7ba3c8" />
      </linearGradient>
      <linearGradient id="corner" x1="0" y1="0" x2="0" y2="1">
        <stop offset="0" stopColor="#7ea9cc" /><stop offset=".45" stopColor="#b0d8fa" /><stop offset="1" stopColor="#c8f4ff" />
      </linearGradient>
    </defs>
    <g stroke="#5b92bd" strokeWidth="5.4" strokeLinejoin="round">
      <path d="M78 122Q200 58 322 41Q444 58 567 122V285L322 365L78 285z" fill="url(#corner)" />
      <path d="M78 285Q150 290 200 311Q260 330 322 365Q384 330 444 311Q500 290 567 285V980Q444 1045 322 1061Q200 1045 78 980z" fill="#c5f0fe" />
      <path d="M200 311Q260 330 322 365Q384 330 444 311L322 320z" fill="#d0fffb" />
      <path d="M322 365V1061" />
      <ellipse cx="322" cy="190" rx="244" ry="140" fill="#b1dafe" />
      <path d="M533 259L567 285" />
      <ellipse cx="322" cy="190" rx="166" ry="95" fill="url(#chamfer)" />
      <ellipse cx="322" cy="200" rx="121" ry="69" fill="url(#bore)" />
      <path d="M427 233Q445 238 468 236" fill="none" />
    </g>
    <g fill="#5b92bd">
      {[[78, 122], [200, 67], [322, 41], [444, 67], [567, 122], [78, 190], [567, 190], [78, 285], [567, 285], [200, 311], [444, 311], [322, 365], [533, 259], [76, 818], [569, 818], [76, 911], [569, 911], [78, 980], [567, 980], [200, 1034], [444, 1034], [322, 1061]].map(([x, y]) => (
        <rect key={`${x}-${y}`} x={x - 5} y={y - 5} width="10" height="10" />
      ))}
    </g>
  </svg>
);

const NavCube = () => (
  <svg width="160" height="145" viewBox="0 15 480 435" className="absolute top-0 right-0">
    <g fill="#e4f3fd" stroke="#5b6266" strokeWidth="2.6" strokeLinejoin="round">
      <path d="M264 34L298 73H230z" />
      <path d="M264 428L298 389H230z" />
      <path d="M67 231L106 196V266z" />
      <path d="M461 231L423 196V266z" />
      <circle cx="436" cy="59" r="20" />
      <path d="M208 54L213 75Q175 86 146 110L157 121L116 137L123 92L133 101Q165 68 208 54z" />
      <path d="M320 54L315 75Q353 86 382 110L371 121L412 137L405 92L395 101Q363 68 320 54z" />
      <path d="M368 353L398 342L429 353V391L398 401L368 391zM368 353L398 364L429 353M398 364V401" stroke="#30363a" />
    </g>
    <g fill="#e6f3fc" stroke="#454d52" strokeWidth="2.6" strokeLinejoin="round">
      <path d="M225 108L255 104L345 131L380 175L382 182L380 273L358 318L316 348L273 358L182 325L155 292L146 266V194L163 160z" />
      <path d="M225 108L179 158L163 160L147 192M179 158L185 176L178 205L155 214L147 192M163 160L225 108" fill="none" />
      <path d="M185 176L273 202L261 231L178 205M273 202L304 199L321 223L310 250L278 255L261 231" fill="none" />
      <path d="M304 199L365 143L380 175L321 223M345 131L365 143M349 152L380 180" fill="none" />
      <path d="M155 214L155 292M278 255L277 345M310 250V340M182 325L277 345L310 340M262 348L310 340" fill="none" />
      <path d="M182 326L268 351" strokeWidth="5" fill="none" />
    </g>
    <g fill="#84898c" fontFamily="Liberation Sans, sans-serif" fontSize="38" stroke="#84898c" strokeWidth=".6">
      <text transform="matrix(.74 .2 -.45 .8 228 156)" textLength="92" lengthAdjust="spacingAndGlyphs">TOP</text>
      <text transform="matrix(.97 .27 0 .9 160 275)" textLength="116" lengthAdjust="spacingAndGlyphs">FRONT</text>
      <text transform="matrix(.6 -.52 0 1 314 298)" textLength="108" lengthAdjust="spacingAndGlyphs">RIGHT</text>
    </g>
    <g strokeWidth="5" fill="none" strokeLinecap="round">
      <path d="M122 212V334" stroke="#7c7cff" />
      <path d="M125 335L194 266" stroke="#7dff7d" />
      <path d="M125 339L254 381" stroke="#ff7676" />
    </g>
  </svg>
);

const AxisCross = () => (
  <svg width="40" height="50" viewBox="0 0 120 150" className="absolute right-0 bottom-[18px]">
    <g transform="translate(-181 -38)">
      <path d="M210 150V112" stroke="#34348c" strokeWidth="4" />
      <path d="M210 90L218 114H202z" fill="#1b1b8c" />
      <path d="M210 150L230 131" stroke="#1e9030" strokeWidth="4" />
      <path d="M237 124L232 137L223 128z" fill="#118020" />
      <path d="M210 150L250 163" stroke="#8c2020" strokeWidth="4" />
      <path d="M271 170L246 168L250 156z" fill="#8c1c1c" />
      <g fontFamily="Liberation Sans, sans-serif" fontSize="27" fontWeight="bold">
        <text x="212" y="86">Z</text><text x="239" y="119">Y</text><text x="272" y="167">X</text>
      </g>
    </g>
  </svg>
);

const TabClose = () => (
  <svg width="14" height="13" viewBox="0 0 14 13"><path d="M1.6 1.4L12.4 11.8M12.4 1.4L1.6 11.8" stroke="#878787" strokeWidth="3" /></svg>
);

export default function App() {
  return (
    <div className="flex h-[866px] w-[1850px] flex-col overflow-hidden bg-[#efefef] font-['Noto_Sans',sans-serif] text-[14px] leading-none text-[#141414]">
      <div className="flex h-4 shrink-0 items-start pl-[6px]">
        {menu.map(([m, w]) => (
          <span key={m} className={`-mt-[5px] leading-[18px] tracking-[0.15px] ${w}`}>
            <span className={m === "Fasteners" ? "" : "underline decoration-2 underline-offset-[2px]"}>{m[0]}</span>
            {m.slice(1)}
          </span>
        ))}
      </div>

      <div className="flex h-[38px] shrink-0 items-center border-b border-[#a8a8a8] pl-px">
        <Group items={[<NewDoc />, <OpenDoc />, <Save />]} />
        <div className="flex items-center pr-2">
          <Handle />
          <Btn><Undo /></Btn><Btn><Undo flip /></Btn><Sep /><Btn><Refresh /></Btn>
        </div>
        <Handle />
        <div className="mr-2 flex h-[25px] w-[190px] items-center rounded-[3px] border border-[#a9a9a9] bg-gradient-to-b from-white to-[#f3f3f3] pr-2 pl-[5px]">
          <Workbench />
          <span className="ml-[6px] flex-1">Fasteners</span>
          <svg width="7" height="4" viewBox="0 0 7 4"><path d="M0 0H7L3.5 4z" fill="#8a8a8a" /></svg>
        </div>
        <Group items={[<WhatsThis />]} />
        <Handle />
        <Btn><PartIcon /></Btn><Btn><Folder /></Btn><Btn><LinkIcon /></Btn><Drop /><Btn><Braces /></Btn>
      </div>

      <Bar>
        <Handle />
        <Btn><Mag kind="fit" /></Btn><Btn><Mag kind="sel" /></Btn><Btn><IsoCube /></Btn><Drop />
        <Btn><PlaneView /></Btn><Sep />
        <Btn><NoClip /></Btn><Drop /><Btn><SelCube /></Btn><Drop /><Btn><Mag kind="sync" /></Btn><Drop /><Btn><Caliper /></Btn>
      </Bar>
      <Bar>
        {row3.map((g, i) => <Group key={i} items={g} />)}
        <More className="mr-1 ml-auto" />
      </Bar>
      <Bar>
        {row4.map((g, i) => <Group key={i} items={g} />)}
        <More className="mr-[5px] ml-auto" />
        <div className="ml-[5px] flex items-center"><Handle /><Btn><TSlot /></Btn></div>
        <More className="mr-1 ml-1" />
      </Bar>
      <Bar>
        {row5.map((g, i) => <Group key={i} items={g} />)}
        <More className="mr-1 ml-auto" />
      </Bar>

      <div className="flex h-[634px] shrink-0">
        <div className="flex w-[394px] shrink-0 flex-col">
          <div className="flex h-5 items-center justify-between pr-[9px]">
            <span className="w-[323px] text-center">Model</span>
            <DockButtons />
          </div>
          <div className="flex h-5 items-center pl-[2px] font-bold">
            <svg width="9" height="5" viewBox="0 0 9 5"><path d="M0 0H9L4.5 5z" fill="#000" /></svg>
            <span className="ml-[8px]"><DocIcon /></span>
            <span className="-mt-px ml-[6px] tracking-[-0.4px]">Unnamed</span>
          </div>
          <div className="flex h-5 w-[143px] items-center bg-[#45a1ff] pl-[41px]">
            <svg width="12" height="8" viewBox="0 0 12 8">
              <path d="M.6 4Q6 -2.8 11.4 4Q6 10.8 .6 4z" fill="#cfe2f8" stroke="#10284a" strokeWidth="1.3" />
              <circle cx="6" cy="3.8" r="2.4" fill="#10284a" /><circle cx="6.8" cy="3" r=".7" fill="#fff" />
            </svg>
            <svg width="12" height="17" viewBox="0 0 12 17" className="ml-[10px]">
              <path d="M4 2L6 .8L10 1.4L10.8 3.6L7.6 14.6L5 16L1.6 15L1 12.4z" fill="#c09a3c" stroke="#5f4a12" strokeWidth=".8" />
              <path d="M4 2.4L7.6 4.4L5 15.6M7.6 4.4L10.6 3.6" fill="none" stroke="#5f4a12" strokeWidth=".8" />
            </svg>
            <span className="ml-[8px] tracking-[0.2px]">M6-Nut</span>
          </div>
          <div className="flex h-[109px] items-end justify-center gap-[3px] pr-[10px] pb-1">
            {rep(6, (i) => <i key={i} className="h-[2px] w-[2px] bg-[#a0a0a0]" />)}
          </div>
          <div className="h-[351px] w-[388px] border-r border-[#dadada]"><PropertyTable /></div>
          <div className="flex h-[37px] w-[388px] items-start">
            <div className="flex h-[28px] w-10 items-center rounded-br-[3px] border-t border-r border-b border-[#a5a5a5] bg-gradient-to-b from-[#e0e0e0] to-[#cecece] pl-[2px] tracking-[0.3px] text-[#7d7d7d]">View</div>
            <div className="flex h-[31px] w-[42px] items-center rounded-b-[3px] border-r border-b border-l border-[#a9a9a9] bg-gradient-to-b from-[#f2f2f2] to-white pt-px pl-1 tracking-[0.2px]">Data</div>
            <div className="h-px flex-1 bg-white" />
          </div>
          <div className="flex h-5 items-center justify-between pr-[9px]">
            <span className="w-[323px] text-center">Tasks</span>
            <DockButtons />
          </div>
          <div className="flex h-[56px] w-[388px] bg-[#eeeeee]">
            <div className="ml-auto flex w-[14px] flex-col border border-[#b0b0b0] bg-[#e3e3e3]">
              <div className="flex h-[13px] items-center justify-center border-b border-[#a0a0a0] bg-[#fbfbfb]"><i className="h-px w-[3px] bg-[#888]" /></div>
              <div className="h-[10px] border-b border-[#a0a0a0] bg-[#fafafa]" />
              <div className="flex-1" />
              <div className="flex h-[13px] items-center justify-center border-t border-[#a0a0a0] bg-[#fbfbfb]"><i className="h-px w-[3px] bg-[#888]" /></div>
            </div>
          </div>
        </div>

        <div className="flex flex-1 flex-col">
          <div className="relative h-[600px] bg-white">
            <NutModel />
            <NavCube />
            <AxisCross />
          </div>
          <div className="flex items-start">
            <div className="flex h-[30px] w-[99px] items-center rounded-b-[3px] border border-[#a5a5a5] bg-gradient-to-b from-[#e0e0e0] to-[#cecece] pl-[5px] text-[#7d7d7d]">
              <Svg size={15} box={15}>
                <path d="M1 1.6Q1 .2 2.4 .2H14.4V4H5V14.8H1z" fill="#cf2a3a" />
                <path d="M.8 4H4.6V14.8H.8z" fill="#ee5f68" />
                <path d="M8.4 8.2L9.6 6.6L11.4 7.2L13.6 5.4V8.4L15 10.4L12.8 11.8L12.4 14.4L9.8 13.6L7 15V10z" fill="#3b8ee6" />
                <path d="M5 3.4H12V5.6H7.4V7.6H10.4V9.6H7.4V13.4H5z" fill="#fff" />
              </Svg>
              <span className="ml-[10px] w-[42px] tracking-[0.1px]">Start</span>
              <span className="mt-[3px] ml-[4px]"><TabClose /></span>
            </div>
            <div className="flex h-[33px] w-[158px] items-center rounded-b-[3px] border-r border-b border-l border-[#a9a9a9] bg-gradient-to-b from-[#efefef] to-white pl-[4px]">
              <DocIcon />
              <span className="ml-[10px] w-[97px] whitespace-nowrap">Unnamed : 1*</span>
              <span className="ml-[8px]"><TabClose /></span>
            </div>
          </div>
        </div>
      </div>
      <div className="flex h-[30px] shrink-0 items-center justify-between pr-[3px]">
        <span className="w-[1786px] text-center tracking-[0.2px]">Report view</span>
        <DockButtons />
      </div>
    </div>
  );
}
